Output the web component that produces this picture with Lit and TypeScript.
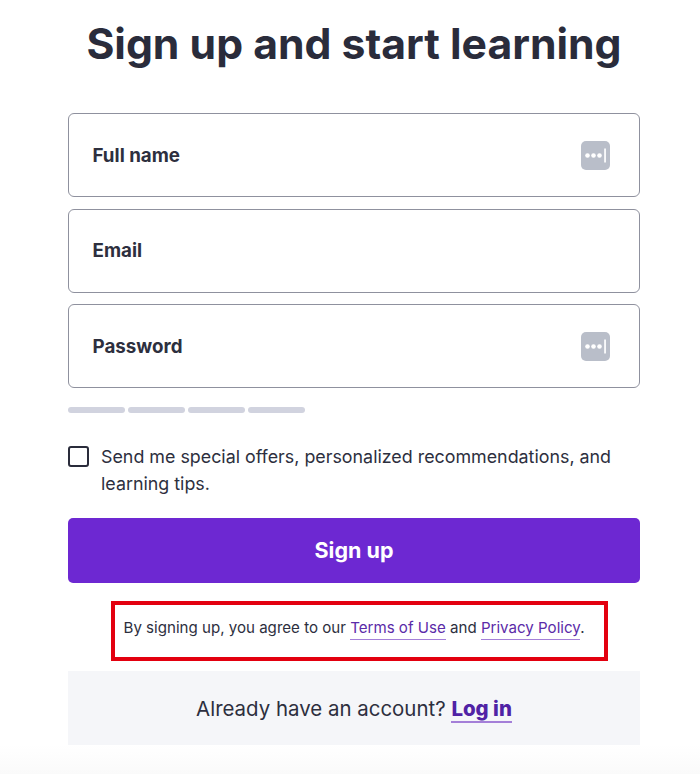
import { LitElement, html, css } from "lit";
import { customElement } from "lit/decorators.js";

const keyIcon = html`<svg class="key" width="29" height="29" viewBox="0 0 29 29">
  <rect width="29" height="29" rx="5" fill="#b9bec9"/>
  <circle cx="6.5" cy="14.5" r="2.3" fill="#fff"/>
  <circle cx="12.5" cy="14.5" r="2.3" fill="#fff"/>
  <circle cx="18.5" cy="14.5" r="2.3" fill="#fff"/>
  <rect x="23.2" y="7.5" width="1.7" height="14" fill="#fff"/>
</svg>`;

@customElement("app-root")
export class AppRoot extends LitElement {
  static styles = css`
    :host {
      display: block;
      width: 700px;
      height: 774px;
      overflow: hidden;
      background: linear-gradient(#fff 0, #fff 745px, #fafafa 774px);
      font-family: Inter, "Liberation Sans", sans-serif;
      color: #2d2f3e;
    }
    .wrap {
      display: flex;
      flex-direction: column;
      padding: 0 60px 0 68px;
    }
    h1 {
      margin: 0;
      height: 89px;
      padding-top: 16px;
      box-sizing: border-box;
      font-size: 42.7px;
      line-height: 56px;
      font-weight: 700;
      text-align: center;
      white-space: nowrap;
      color: #2a2c3b;
    }
    .fields {
      margin-top: 24px;
      display: flex;
      flex-direction: column;
      gap: 11.5px;
    }
    .field {
      height: 84px;
      box-sizing: border-box;
      border: 1.5px solid #8f919e;
      border-radius: 6px;
      padding: 0 29px 0 23.5px;
      display: flex;
      align-items: center;
      justify-content: space-between;
      font-size: 18.75px;
      font-weight: 700;
    }
    .key { display: block; }
    .strength {
      margin-top: 19px;
      display: flex;
      gap: 3px;
    }
    .strength span {
      width: 57px;
      height: 6px;
      border-radius: 3px;
      background: #d1d3df;
    }
    .offers {
      margin-top: 29.5px;
      display: flex;
      gap: 12px;
      font-size: 17.85px;
      line-height: 27px;
    }
    .box {
      flex: none;
      width: 21px;
      height: 21px;
      margin-top: 3.5px;
      box-sizing: border-box;
      border: 2.6px solid #2a2c3b;
      border-radius: 3px;
    }
    .btn {
      margin-top: 21px;
      height: 65px;
      border-radius: 5px;
      background: #6d28d2;
      color: #fff;
      font-size: 21.5px;
      font-weight: 700;
      display: flex;
      align-items: center;
      justify-content: center;
    }
    .terms {
      margin: 18px 32px 0 43px;
      height: 60px;
      box-sizing: border-box;
      border: 4px solid #e3000f;
      display: flex;
      align-items: center;
      justify-content: center;
      font-size: 15.1px;
      padding: 0 11px 6px 0;
      white-space: nowrap;
    }
    .terms a {
      color: #5b2ba8;
      text-decoration: none;
      border-bottom: 1px solid #a47fd8;
      padding-bottom: 2px;
    }
    .login {
      margin-top: 10px;
      height: 74px;
      box-sizing: border-box;
      padding-top: 1px;
      background: #f5f6f9;
      display: flex;
      align-items: center;
      justify-content: center;
      font-size: 20.45px;
    }
    .login a {
      color: #5022a5;
      font-weight: 800;
      text-decoration: none;
      border-bottom: 2px solid #a47fd8;
    }
  `;

  render() {
    return html`<div class="wrap">
      <h1>Sign up and start learning</h1>
      <div class="fields">
        <div class="field"><span>Full name</span>${keyIcon}</div>
        <div class="field"><span>Email</span></div>
        <div class="field"><span>Password</span>${keyIcon}</div>
      </div>
      <div class="strength"><span></span><span></span><span></span><span></span></div>
      <div class="offers">
        <div class="box"></div>
        <div>Send me special offers, personalized recommendations, and learning tips.</div>
      </div>
      <div class="btn">Sign up</div>
      <div class="terms">
        <span>By signing up, you agree to our <a>Terms of Use</a> and <a>Privacy Policy</a>.</span>
      </div>
      <div class="login"><span>Already have an account? <a>Log in</a></span></div>
    </div>`;
  }
}
